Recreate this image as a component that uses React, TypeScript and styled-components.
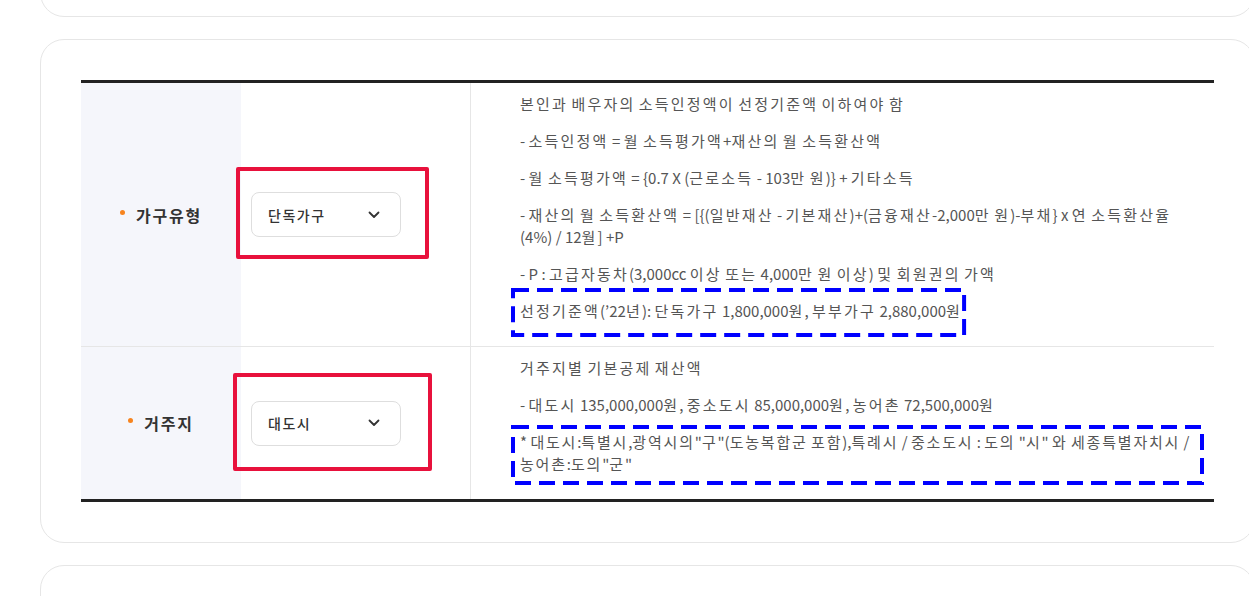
import React from "react";
import styled, { createGlobalStyle } from "styled-components";

const GlobalStyle = createGlobalStyle`
  html, body {
    margin: 0;
    padding: 0;
    background: #ffffff;
    overflow: hidden;
  }
  body {
    font-family: "Noto Sans CJK KR", "Noto Sans", sans-serif;
    color: #555;
  }
  * {
    box-sizing: border-box;
  }
`;

type Inset = { top: number; right: number; bottom: number; left: number };

// Hangul in the reference font runs wider than Noto's, so Hangul runs get extra tracking
const HANGUL = /([\uAC00-\uD7A3]+)/g;

const Hangul = styled.span<{ $ls: number }>`
  letter-spacing: ${(p) => p.$ls}px;
`;

const ko = (text: string, ls = 2.2) =>
  text.split(HANGUL).map((part, i) =>
    i % 2 ? (
      <Hangul key={i} $ls={ls}>
        {part}
      </Hangul>
    ) : (
      part
    )
  );

const Page = styled.div`
  display: flex;
  flex-direction: column;
  gap: 22px;
  padding-left: 40px;
  margin-top: -63px;
  width: 1300px;
`;

const Card = styled.section<{ $height?: number }>`
  width: 1215px;
  border: 1px solid #e6e6e6;
  border-radius: 24px;
  background: #fff;
  ${(p) => (p.$height ? `height: ${p.$height}px;` : "")}
`;

const MainCard = styled(Card)`
  padding: 40px;
`;

const Table = styled.div`
  display: grid;
  grid-template-columns: 160px 230px 1fr;
  border-top: 3px solid #222;
  border-bottom: 3px solid #222;
`;

const Row = styled.div<{ $last?: boolean }>`
  display: contents;

  & > * {
    border-bottom: ${(p) => (p.$last ? "none" : "1px solid #e6e6e6")};
  }
`;

const LabelCell = styled.div`
  background: #f5f6fb;
  display: flex;
  align-items: center;
  justify-content: center;
  gap: 11px;
  font-size: 16px;
  font-weight: 700;
  color: #333;
`;

const Dot = styled.span`
  width: 5px;
  height: 5px;
  border-radius: 50%;
  background: #f7841e;
  margin-top: -5px;
`;

const SelectCell = styled.div`
  display: flex;
  align-items: center;
  padding-left: 10px;
  border-right: 1px solid #e6e6e6;
`;

const SelectWrap = styled.div`
  position: relative;
`;

const SelectBox = styled.button`
  width: 150px;
  height: 45px;
  display: flex;
  align-items: center;
  justify-content: space-between;
  padding: 0 20px 0 16px;
  border: 1px solid #dedede;
  border-radius: 8px;
  background: #fff;
  font-family: inherit;
  font-size: 14px;
  font-weight: 500;
  color: #333;
  cursor: pointer;
`;

const RedMark = styled.span<{ $inset: Inset }>`
  position: absolute;
  top: ${(p) => -p.$inset.top}px;
  right: ${(p) => -p.$inset.right}px;
  bottom: ${(p) => -p.$inset.bottom}px;
  left: ${(p) => -p.$inset.left}px;
  border: 4px solid #e8113c;
  border-radius: 2px;
  pointer-events: none;
`;

const DescCell = styled.div`
  display: flex;
  flex-direction: column;
  gap: 15px;
  padding: 10px 8px 24px 49px;
  font-size: 15px;
  line-height: 22px;
  color: #555;
  word-break: keep-all;
`;

const Para = styled.p`
  margin: 0;
`;

const Boxed = styled.div<{ $inline?: boolean }>`
  position: relative;
  align-self: ${(p) => (p.$inline ? "flex-start" : "stretch")};
`;

const BlueMark = styled.svg<{ $inset: Inset }>`
  position: absolute;
  top: ${(p) => -p.$inset.top}px;
  left: ${(p) => -p.$inset.left}px;
  width: calc(100% + ${(p) => p.$inset.left + p.$inset.right}px);
  height: calc(100% + ${(p) => p.$inset.top + p.$inset.bottom}px);
  overflow: visible;
  pointer-events: none;
`;

const Chevron = () => (
  <svg width="12" height="8" viewBox="0 0 12 8" fill="none">
    <path d="M1.5 1.5L6 6L10.5 1.5" stroke="#333" strokeWidth="1.8" strokeLinecap="round" strokeLinejoin="round" />
  </svg>
);

const DashedRect: React.FC<{ inset: Inset }> = ({ inset }) => (
  <BlueMark $inset={inset}>
    <rect
      x="2"
      y="2"
      fill="none"
      stroke="#0000ff"
      strokeWidth="4"
      strokeDasharray="16 8"
      style={{ width: "calc(100% - 4px)", height: "calc(100% - 4px)" }}
    />
  </BlueMark>
);

const Select: React.FC<{ value: string; mark: Inset }> = ({ value, mark }) => (
  <SelectWrap>
    <SelectBox type="button">
      <span>{ko(value, 1.5)}</span>
      <Chevron />
    </SelectBox>
    <RedMark $inset={mark} />
  </SelectWrap>
);

export default function App() {
  return (
    <>
      <GlobalStyle />
      <Page>
        <Card $height={80} />
        <MainCard>
          <Table>
            <Row>
              <LabelCell>
                <Dot />
                <span>{ko("가구유형", 1.8)}</span>
              </LabelCell>
              <SelectCell>
                <Select value="단독가구" mark={{ top: 25, right: 28, bottom: 22, left: 15 }} />
              </SelectCell>
              <DescCell>
                <Para>{ko("본인과 배우자의 소득인정액이 선정기준액 이하여야 함")}</Para>
                <Para>{ko("- 소득인정액 = 월 소득평가액+재산의 월 소득환산액")}</Para>
                <Para>{ko("- 월 소득평가액 = {0.7 X (근로소득 - 103만 원)} + 기타소득")}</Para>
                <Para>
                  {ko("- 재산의 월 소득환산액 = [{(일반재산 - 기본재산)+(금융재산-2,000만 원)-부채} x 연 소득환산율")}
                  <br />
                  {ko("(4%) / 12월] +P")}
                </Para>
                <Para>{ko("- P : 고급자동차(3,000cc 이상 또는 4,000만 원 이상) 및 회원권의 가액")}</Para>
                <Boxed $inline>
                  <Para>{ko("선정기준액(’22년): 단독가구 1,800,000원, 부부가구 2,880,000원")}</Para>
                  <DashedRect inset={{ top: 12, right: 4, bottom: 15, left: 9 }} />
                </Boxed>
              </DescCell>
            </Row>
            <Row $last>
              <LabelCell>
                <Dot />
                <span>{ko("거주지", 1.8)}</span>
              </LabelCell>
              <SelectCell>
                <Select value="대도시" mark={{ top: 28, right: 31, bottom: 25, left: 18 }} />
              </SelectCell>
              <DescCell>
                <Para>{ko("거주지별 기본공제 재산액")}</Para>
                <Para>{ko("- 대도시 135,000,000원, 중소도시 85,000,000원, 농어촌 72,500,000원")}</Para>
                <Boxed>
                  <Para>
                    {ko('* 대도시:특별시,광역시의"구"(도농복합군 포함),특례시 / 중소도시 : 도의 "시" 와 세종특별자치시 /', 1.8)}
                    <br />
                    {ko('농어촌:도의"군"', 1.8)}
                  </Para>
                  <DashedRect inset={{ top: 6, right: -2, bottom: 10, left: 9 }} />
                </Boxed>
              </DescCell>
            </Row>
          </Table>
        </MainCard>
        <Card $height={120} />
      </Page>
    </>
  );
}
